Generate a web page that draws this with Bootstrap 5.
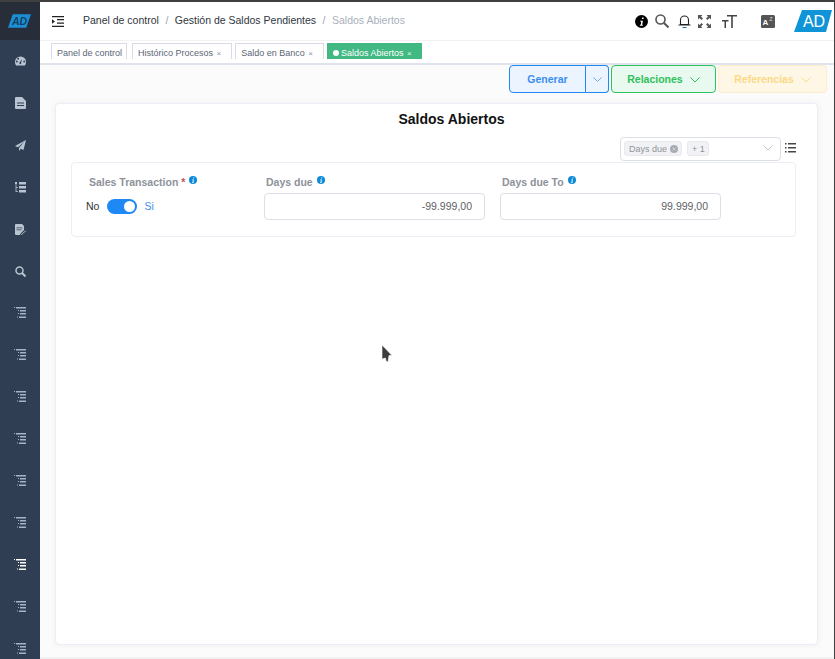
<!DOCTYPE html>
<html lang="en">
<head>
    <meta charset="UTF-8">
    <meta name="viewport" content="width=device-width, initial-scale=1.0">
    <title>Saldos Abiertos</title>
    <link href="https://cdn.jsdelivr.net/npm/bootstrap@5.3.0/dist/css/bootstrap.min.css" rel="stylesheet">
    <style>
        html, body { height: 100%; overflow: hidden; }
        body {
            font-family: "Liberation Sans", Arial, sans-serif;
            background: #fff;
            border-top: 2px solid #3f3f3f;
            border-right: 1px solid #3f3f3f;
            font-size: 12px;
        }
        .app-shell { height: 657px; }
        .side-bar { width: 40px; background: #2f3e53; flex: none; overflow: hidden; }
        .side-logo { height: 38px; background: #272e39; flex: none; padding-right: 2px; }
        .side-icon { height: 42px; flex: none; color: #b9c4d2; }
        .side-tree { color: #a5b3c5; }
        .main-area { min-width: 0; background: #fbfbfb; border-bottom: 2px solid #f1f1f1; }
        .top-bar { height: 38px; background: #fff; padding-left: 12px; flex: none; }
        .crumbs { font-size: 10.5px; margin-left: 19px; color: #2f3640; }
        .crumbs .sep { color: #9aa0ab; margin: 0 6.500px; }
        .crumbs .here { color: #a9b0bc; }
        .top-icons { margin-right: 2px; }
        .ti-search { margin-left: 7px; }
        .ti-bell { margin-left: 9px; }
        .ti-expand { margin-left: 7px; }
        .ti-font { margin-left: 11px; }
        .ti-az { margin-left: 24px; }
        .ti-logo { margin-left: 19px; }
        .tab-strip { height: 25px; background: #fff; border-top: 1px solid #f2f2f2; border-bottom: 2px solid #dfe3eb; padding: 2px 0 0 11px; gap: 3px; flex: none; }
        .tab-item { height: 16px; border: 1px solid #d8dce5; border-bottom: 0; font-size: 9px; line-height: 12px; color: #5b6675; padding: 3px 10px 0 5px; background: #fff; white-space: nowrap; }
        .tab-first { padding-right: 4px; margin-right: 2px; }
        .tab-item .shut { font-size: 8px; color: #8a93a0; margin-left: 1px; }
        .tab-live { background: #42b883; border-color: #42b883; color: #fff; padding-right: 9px; }
        .tab-live .shut { color: #e6f7ef; }
        .tab-live .dot { display: inline-block; width: 6px; height: 6px; background: #fff; border-radius: 50%; margin-right: 2px; vertical-align: 0; }
        .action-row { height: 28px; padding-right: 7px; gap: 2px; flex: none; }
        .act-btn { height: 28px; border-radius: 4px; font-size: 10.5px; font-weight: 700; padding: 1px 0 0; }
        .act-blue { background: #ecf5ff; border: 1px solid #1e88f5; color: #3b8df0; }
        .act-main { width: 77px; border-radius: 4px 0 0 4px; }
        .act-drop { width: 23px; border-left: 0; border-radius: 0 4px 4px 0; }
        .act-green { width: 105px; background: #e8f9ef; border: 1px solid #2fc15c; color: #2ec05a; }
        .act-amber { width: 109px; background: #fff7e6; border: 1px solid #ffeccb; color: #fbd985; }
        .act-chev { margin-left: 7px; }
        .page-sheet { margin: 10px 16px 0 15px; height: 542px; background: #fff; border: 1px solid #ecedf6; border-radius: 4px; box-shadow: 0 0 6px rgba(0,0,0,.05); padding: 7px 21px 0 15px; flex: none; }
        .sheet-title { font-size: 14px; font-weight: 700; color: #111; text-align: center; line-height: 16px; margin: 0; padding-left: 36px; }
        .tool-row { height: 24px; margin-top: 10px; gap: 4px; }
        .tool-list { margin-bottom: 2px; }
        .pick-box { width: 161px; height: 24px; border: 1px solid #dcdfe6; border-radius: 4px; padding: 0 3px 2px; gap: 5px; }
        .pick-tag { height: 15px; line-height: 14px; background: #f0f2f5; border: 1px solid #e9e9eb; border-radius: 3px; font-size: 9px; color: #909399; padding: 0 3px 0 4px; white-space: nowrap; }
        .pick-x { margin-left: 3px; vertical-align: -1px; }
        .filter-box { height: 75px; margin-top: 1px; border: 1px solid #ebeef5; border-radius: 4px; }
        .fld-label { font-size: 10.5px; font-weight: 700; color: #8d929a; line-height: 12px; white-space: nowrap; margin-bottom: 5px; padding-left: 2px; }
        .fld-star { color: #c0504d; }
        .fld-info { color: #0d8ad6; vertical-align: 2px; margin-left: 1px; }
        .col-sales .fld-info { margin-left: 4px; }
        .fld-input { height: 27px; background: #fff; border: 1px solid #dcdfe6; border-radius: 4px; text-align: right; font-size: 10.500px; line-height: 25px; padding-right: 12px; color: #606266; }
        .col-sales { width: 192px; padding: 13px 0 0 15px; flex: none; }
        .col-sales .fld-label { margin-bottom: 0; }
        .col-from { width: 221px; margin-right: 15px; padding-top: 13px; flex: none; }
        .col-to { width: 221px; padding-top: 13px; flex: none; }
        .switch-line { margin: 11px 0 0 -1px; font-size: 10.5px; gap: 8px; color: #333; }
        .switch-track { width: 30px; height: 15px; background: #1e88f5; border-radius: 8px; position: relative; }
        .switch-knob { position: absolute; right: 2px; top: 2px; width: 11px; height: 11px; background: #fff; border-radius: 50%; }
        .switch-on { color: #3b8df0; margin-left: -1px; }
        .mouse-arrow { position: absolute; left: 381px; top: 344px; }
    </style>
</head>
<body>
    <svg width="0" height="0" class="position-absolute">
        <symbol id="i-tree" viewBox="0 0 12 12">
            <path fill="currentColor" d="M0 0h1v1H0zM2 0h10v1.400H2zM4 3h1v1H4zM6 3h6v1.400H6zM4 6h1v1H4zM6 6h6v1.400H6zM3 9.500h1v1H3zM5 9.500h7v1.400H5z"/>
        </symbol>
        <symbol id="i-info" viewBox="0 0 16 16">
            <circle cx="8" cy="8" r="8" fill="currentColor"/>
            <path fill="#fff" d="M8.800 3h2l-.4 2h-2zM6.200 7h3.600l-1 5h1l-.3 1.300H5.900l.3-1.300h.9l.6-3.700h-.8z"/>
        </symbol>
    </svg>

    <div class="app-shell d-flex">
        <div class="side-bar d-flex flex-column">
            <div class="side-logo d-flex align-items-center justify-content-center">
                <svg width="23" height="14" viewBox="0 0 24 14"><path fill="#1b8fd6" d="M5 0h19l-5 14H0z"/><text x="12" y="11" font-family="Liberation Sans" font-size="11" font-style="italic" font-weight="700" fill="#15405f" text-anchor="middle">AD</text></svg>
            </div>
            <div class="side-icon d-flex justify-content-center align-items-center">
                <svg width="11" height="10" viewBox="0 0 12 10"><path fill="currentColor" d="M6 0a6 6 0 0 0-6 6c0 1.500.4 2.800 1.200 4h9.600C11.600 8.800 12 7.500 12 6a6 6 0 0 0-6-6zM2 6.500a1 1 0 1 1 0-2 1 1 0 0 1 0 2zm1.500-3a1 1 0 1 1 0-2 1 1 0 0 1 0 2zM6 8.500a1.300 1.300 0 0 1-.6-2.400l2.300-3.400-1 3.900a1.300 1.300 0 0 1-.7 1.900zM10 6.500a1 1 0 1 1 0-2 1 1 0 0 1 0 2z"/></svg>
            </div>
            <div class="side-icon d-flex justify-content-center align-items-center">
                <svg width="11" height="12" viewBox="0 0 11 12"><path fill="currentColor" d="M1 0h6l4 4v7a1 1 0 0 1-1 1H1a1 1 0 0 1-1-1V1a1 1 0 0 1 1-1z"/><path fill="#2f3e53" d="M2 5.500h7v1H2zM2 8h7v1H2z"/></svg>
            </div>
            <div class="side-icon d-flex justify-content-center align-items-center">
                <svg width="11" height="11" viewBox="0 0 11 11"><path fill="currentColor" d="M11 0L0 6l3 1.200L9 2 4 8v3l1.800-2.300L8.500 10z"/></svg>
            </div>
            <div class="side-icon d-flex justify-content-center align-items-center">
                <svg width="11" height="11" viewBox="0 0 11 11"><path fill="currentColor" d="M0 0h2v2H0zM4 0h7v2.500H4zM4 4h7v2.500H4zM4 8h7v2.500H4zM.6 2h.8v7.200H3V10H.6zM1 5h2v.8H1z"/></svg>
            </div>
            <div class="side-icon d-flex justify-content-center align-items-center">
                <svg width="11" height="11" viewBox="0 0 11 11"><path fill="currentColor" d="M1 0h6l2 2v4L5.500 9.500 5 11H1a1 1 0 0 1-1-1V1a1 1 0 0 1 1-1z"/><path fill="#2f3e53" d="M1.500 3.500h6v.8h-6zM1.500 5.500h5v.8h-5z"/><path fill="currentColor" d="M6 10.500l4.500-4 .5.500-4.500 4z"/></svg>
            </div>
            <div class="side-icon d-flex justify-content-center align-items-center">
                <svg width="11" height="11" viewBox="0 0 11 11"><circle cx="4.500" cy="4.500" r="3.500" fill="none" stroke="currentColor" stroke-width="1.500"/><path stroke="currentColor" stroke-width="2" d="M7 7l3.500 3.500"/></svg>
            </div>
            <div class="side-icon side-tree d-flex justify-content-center align-items-center"><svg width="12" height="12"><use href="#i-tree"/></svg></div>
            <div class="side-icon side-tree d-flex justify-content-center align-items-center"><svg width="12" height="12"><use href="#i-tree"/></svg></div>
            <div class="side-icon side-tree d-flex justify-content-center align-items-center"><svg width="12" height="12"><use href="#i-tree"/></svg></div>
            <div class="side-icon side-tree d-flex justify-content-center align-items-center"><svg width="12" height="12"><use href="#i-tree"/></svg></div>
            <div class="side-icon side-tree d-flex justify-content-center align-items-center"><svg width="12" height="12"><use href="#i-tree"/></svg></div>
            <div class="side-icon side-tree d-flex justify-content-center align-items-center"><svg width="12" height="12"><use href="#i-tree"/></svg></div>
            <div class="side-icon d-flex justify-content-center align-items-center text-white"><svg width="12" height="12"><use href="#i-tree"/></svg></div>
            <div class="side-icon side-tree d-flex justify-content-center align-items-center"><svg width="12" height="12"><use href="#i-tree"/></svg></div>
            <div class="side-icon side-tree d-flex justify-content-center align-items-center"><svg width="12" height="12"><use href="#i-tree"/></svg></div>
        </div>

        <div class="main-area flex-grow-1 d-flex flex-column">
            <div class="top-bar d-flex align-items-center">
                <svg width="12" height="11" viewBox="0 0 12 11"><path fill="#222" d="M0 0h12v1.300H0zM5 3h7v1.300H5zM5 6.500h7v1.300H5zM0 9.700h12V11H0zM0 3.300l3 2.200-3 2.200z"/></svg>
                <div class="crumbs"><span>Panel de control</span><span class="sep">/</span><span>Gestión de Saldos Pendientes</span><span class="sep">/</span><span class="here">Saldos Abiertos</span></div>
                <div class="top-icons ms-auto d-flex align-items-center">
                    <svg width="13" height="13" class="text-black"><use href="#i-info"/></svg>
                    <svg width="14" height="14" viewBox="0 0 14 14" class="ti-search"><circle cx="5.500" cy="5.500" r="4.500" fill="none" stroke="#555" stroke-width="1.600"/><path stroke="#555" stroke-width="2" d="M9 9l4.500 4.500"/></svg>
                    <svg width="13" height="14" viewBox="0 0 13 14" class="ti-bell"><path fill="none" stroke="#222" stroke-width="1.100" d="M2.500 10.500V6a4 4 0 0 1 8 0v4.500zM.5 11h12"/><path stroke="#1b6fb5" d="M4.500 13.500h4"/></svg>
                    <svg width="13" height="13" viewBox="0 0 13 13" class="ti-expand"><path fill="#555" d="M0 0h4.500L3 1.500l2 2-1.500 1.500-2-2L0 4.500zM13 0v4.500L11.500 3l-2 2L8 3.500l2-2L8.500 0zM0 13V8.500L1.500 10l2-2L5 9.500l-2 2L4.500 13zM13 13H8.500l1.500-1.500-2-2L9.500 8l2 2L13 8.500z"/></svg>
                    <svg width="15" height="14" viewBox="0 0 15 14" class="ti-font"><path fill="#444" d="M5 1h10v1.500h-4.200V14H9.200V2.500H5zM0 6h6.500v1.400H4V14H2.500V7.400H0z"/></svg>
                    <svg width="14" height="13" viewBox="0 0 14 13" class="ti-az"><rect width="14" height="13" rx="1.500" fill="#555"/><text x="1.500" y="10" font-family="Liberation Sans" font-size="8" font-weight="700" fill="#fff">A</text><text x="8.500" y="6" font-family="Liberation Sans" font-size="5" fill="#ddd">Z</text></svg>
                    <svg width="38" height="22" viewBox="0 0 38 22" class="ti-logo"><path fill="#0f94d8" d="M8 0h30l-6 22H0z"/><text x="20" y="17" font-family="Liberation Sans" font-size="16" fill="#fff" text-anchor="middle">AD</text></svg>
                </div>
            </div>

            <div class="tab-strip d-flex">
                <div class="tab-item tab-first">Panel de control</div>
                <div class="tab-item">Histórico Procesos <span class="shut">×</span></div>
                <div class="tab-item">Saldo en Banco <span class="shut">×</span></div>
                <div class="tab-item tab-live"><span class="dot"></span>Saldos Abiertos <span class="shut">×</span></div>
            </div>

            <div class="action-row d-flex justify-content-end">
                <div class="d-flex">
                    <button class="btn act-btn act-blue act-main">Generar</button>
                    <button class="btn act-btn act-blue act-drop">
                        <svg width="9" height="5" viewBox="0 0 9 5"><path fill="none" stroke="#6aa9ee" d="M.5.500l4 4 4-4"/></svg>
                    </button>
                </div>
                <button class="btn act-btn act-green">Relaciones<svg width="10" height="6" viewBox="0 0 10 6" class="act-chev"><path fill="none" stroke="#2ec05a" d="M.5.500l4.500 4.500L9.500.500"/></svg></button>
                <button class="btn act-btn act-amber">Referencias<svg width="10" height="6" viewBox="0 0 10 6" class="act-chev"><path fill="none" stroke="#fbd985" d="M.5.500l4.500 4.500L9.500.500"/></svg></button>
            </div>

            <div class="page-sheet">
                <h1 class="sheet-title">Saldos Abiertos</h1>
                <div class="tool-row d-flex justify-content-end align-items-center">
                    <div class="pick-box d-flex align-items-center">
                        <span class="pick-tag">Days due<svg width="8" height="8" viewBox="0 0 8 8" class="pick-x"><circle cx="4" cy="4" r="4" fill="#a8abb2"/><path stroke="#d8dade" stroke-width=".8" d="M2.500 2.500l3 3M5.500 2.500l-3 3"/></svg></span>
                        <span class="pick-tag">+ 1</span>
                        <svg width="10" height="6" viewBox="0 0 10 6" class="ms-auto me-1"><path fill="none" stroke="#c0c4cc" d="M.5.500l4.500 4.500L9.500.500"/></svg>
                    </div>
                    <svg width="11" height="10" viewBox="0 0 11 10" class="tool-list"><path fill="#444" d="M0 0h1.500v1.500H0zM3 0h8v1.500H3zM0 4h1.500v1.500H0zM3 4h8v1.500H3zM0 8h1.500v1.500H0zM3 8h8v1.500H3z"/></svg>
                </div>
                <div class="filter-box d-flex">
                    <div class="col-sales">
                        <div class="fld-label">Sales Transaction <span class="fld-star">*</span><svg width="8" height="8" class="fld-info"><use href="#i-info"/></svg></div>
                        <div class="switch-line d-flex align-items-center">
                            <span>No</span>
                            <div class="switch-track"><div class="switch-knob"></div></div>
                            <span class="switch-on">Si</span>
                        </div>
                    </div>
                    <div class="col-from">
                        <div class="fld-label">Days due <svg width="8" height="8" class="fld-info"><use href="#i-info"/></svg></div>
                        <div class="fld-input">-99.999,00</div>
                    </div>
                    <div class="col-to">
                        <div class="fld-label">Days due To <svg width="8" height="8" class="fld-info"><use href="#i-info"/></svg></div>
                        <div class="fld-input">99.999,00</div>
                    </div>
                </div>
            </div>
        </div>
    </div>

    <svg class="mouse-arrow" width="12" height="20" viewBox="0 0 12 20"><path fill="#3c3c3c" stroke="#fff" stroke-width=".6" d="M1 1l10 10.500H8L7 18l-2-1-.5-3L1 15z"/></svg>
</body>
</html>
